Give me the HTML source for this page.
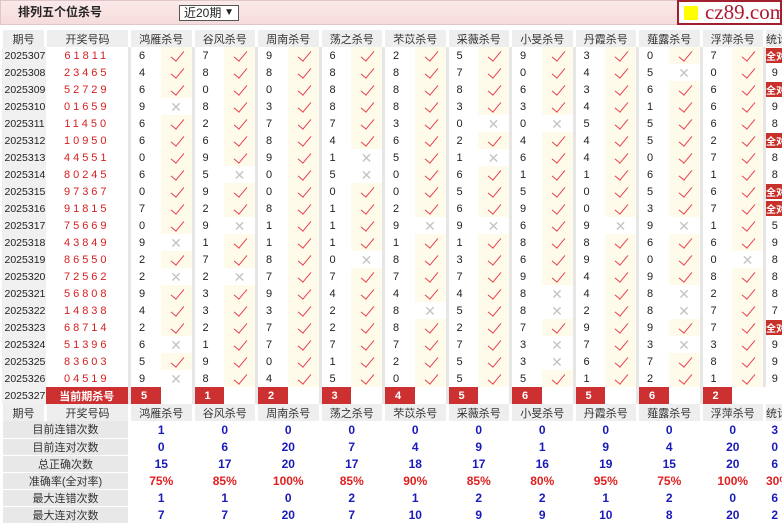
<!DOCTYPE html>
<html><head><meta charset="utf-8"><style>
*{margin:0;padding:0;box-sizing:border-box}
body{width:782px;height:523px;overflow:hidden;background:#fff;font-family:"Liberation Sans","Noto Sans CJK SC",sans-serif;font-size:11px;color:#222;position:relative}
.top{position:absolute;left:0;top:0;width:680px;height:25px;background:linear-gradient(#fbe9e9,#f6dcdc);border:1px solid #e0c6c6}
.title{position:absolute;left:17px;top:4px;font-weight:bold;font-size:12px;line-height:15px}
.sel{position:absolute;left:178px;top:4px;width:60px;height:16px;border:1px solid #555;background:#fff;font-size:12px;padding-left:4px;line-height:14px}
.sel b{position:absolute;right:4px;top:0;font-size:10px}
.logo{position:absolute;left:677px;top:0;width:105px;height:25px;border:2px solid #a02030;background:#fff;font-family:"Liberation Serif",serif;font-size:21px;color:#b01830;line-height:21px;padding-left:26px}
.logo i{position:absolute;left:5px;top:4px;width:14px;height:14px;background:#ffff00}
table{position:absolute;left:0;top:30px;border-collapse:collapse;table-layout:fixed;width:782px}
td{height:17px;white-space:nowrap;overflow:hidden;padding:0}
tr.h td{background:#eee;text-align:center;color:#333;border-left:3px solid #fff}
td.q{background:#f0f0f0;text-align:left;padding-left:3px;font-size:10.5px}
td.k{text-align:center;color:#d42020;letter-spacing:3px;font-size:11px}
td.n{padding-left:8px;border-left:3px solid #e6e6e6}
td.m{background:#fffbea;font-size:0;position:relative}
td.m::after{content:"";position:absolute;left:13px;top:1px;width:6px;height:12px;border-right:1.6px solid #e8404e;border-bottom:1.6px solid #e8404e;transform:rotate(40deg)}
td.x{background:#fff;text-align:center;color:#c4c4c4;font-size:14px;line-height:16px}
td.s{text-align:center;border-left:3px solid #e6e6e6}
td.s span{display:block;background:#c8302a;color:#fff;font-weight:bold;font-size:10px;margin:1px 0}
tr.c td.r{background:#cc3030;color:#fff;font-weight:bold;text-align:center}
tr.c td.n{background:#cc3030;color:#fff;font-weight:bold;padding-left:10px}
tr.st td{text-align:center;color:#1a1ab8;font-weight:bold;font-size:12px;border-left:3px solid #fff}
tr.st td.l{background:#e8e8e8;color:#333;font-weight:normal;font-size:11px;border-bottom:1px solid #fff}
tr.st.p td{color:#e02020}
tr.st.p td.l{color:#333}
</style></head><body>
<div class="top"><span class="title">排列五个位杀号</span><div class="sel">近20期<b>▼</b></div></div>
<div class="logo"><i></i>cz89.com</div>
<table>
<colgroup><col style="width:44px"><col style="width:84px">
<col style="width:31px"><col style="width:32.5px"><col style="width:31px"><col style="width:32.5px"><col style="width:31px"><col style="width:32.5px"><col style="width:31px"><col style="width:32.5px"><col style="width:31px"><col style="width:32.5px"><col style="width:31px"><col style="width:32.5px"><col style="width:31px"><col style="width:32.5px"><col style="width:31px"><col style="width:32.5px"><col style="width:31px"><col style="width:32.5px"><col style="width:31px"><col style="width:32.5px"><col style="width:19px"></colgroup>
<tr class="h"><td>期号</td><td>开奖号码</td><td colspan=2>鸿雁杀号</td><td colspan=2>谷风杀号</td><td colspan=2>周南杀号</td><td colspan=2>荡之杀号</td><td colspan=2>芣苡杀号</td><td colspan=2>采薇杀号</td><td colspan=2>小旻杀号</td><td colspan=2>丹霞杀号</td><td colspan=2>薤露杀号</td><td colspan=2>浮萍杀号</td><td>统计</td></tr>
<tr><td class=q>2025307</td><td class=k>61811</td><td class=n>6</td><td class=m>✓</td><td class=n>7</td><td class=m>✓</td><td class=n>9</td><td class=m>✓</td><td class=n>6</td><td class=m>✓</td><td class=n>2</td><td class=m>✓</td><td class=n>5</td><td class=m>✓</td><td class=n>9</td><td class=m>✓</td><td class=n>3</td><td class=m>✓</td><td class=n>0</td><td class=m>✓</td><td class=n>7</td><td class=m>✓</td><td class=s><span>全对</span></td></tr>
<tr><td class=q>2025308</td><td class=k>23465</td><td class=n>4</td><td class=m>✓</td><td class=n>8</td><td class=m>✓</td><td class=n>8</td><td class=m>✓</td><td class=n>8</td><td class=m>✓</td><td class=n>8</td><td class=m>✓</td><td class=n>7</td><td class=m>✓</td><td class=n>0</td><td class=m>✓</td><td class=n>4</td><td class=m>✓</td><td class=n>5</td><td class=x>✕</td><td class=n>0</td><td class=m>✓</td><td class=s>9</td></tr>
<tr><td class=q>2025309</td><td class=k>52729</td><td class=n>6</td><td class=m>✓</td><td class=n>0</td><td class=m>✓</td><td class=n>0</td><td class=m>✓</td><td class=n>8</td><td class=m>✓</td><td class=n>8</td><td class=m>✓</td><td class=n>8</td><td class=m>✓</td><td class=n>6</td><td class=m>✓</td><td class=n>3</td><td class=m>✓</td><td class=n>6</td><td class=m>✓</td><td class=n>6</td><td class=m>✓</td><td class=s><span>全对</span></td></tr>
<tr><td class=q>2025310</td><td class=k>01659</td><td class=n>9</td><td class=x>✕</td><td class=n>8</td><td class=m>✓</td><td class=n>3</td><td class=m>✓</td><td class=n>8</td><td class=m>✓</td><td class=n>8</td><td class=m>✓</td><td class=n>3</td><td class=m>✓</td><td class=n>3</td><td class=m>✓</td><td class=n>4</td><td class=m>✓</td><td class=n>1</td><td class=m>✓</td><td class=n>6</td><td class=m>✓</td><td class=s>9</td></tr>
<tr><td class=q>2025311</td><td class=k>11450</td><td class=n>6</td><td class=m>✓</td><td class=n>2</td><td class=m>✓</td><td class=n>7</td><td class=m>✓</td><td class=n>7</td><td class=m>✓</td><td class=n>3</td><td class=m>✓</td><td class=n>0</td><td class=x>✕</td><td class=n>0</td><td class=x>✕</td><td class=n>5</td><td class=m>✓</td><td class=n>5</td><td class=m>✓</td><td class=n>6</td><td class=m>✓</td><td class=s>8</td></tr>
<tr><td class=q>2025312</td><td class=k>10950</td><td class=n>6</td><td class=m>✓</td><td class=n>6</td><td class=m>✓</td><td class=n>8</td><td class=m>✓</td><td class=n>4</td><td class=m>✓</td><td class=n>6</td><td class=m>✓</td><td class=n>2</td><td class=m>✓</td><td class=n>4</td><td class=m>✓</td><td class=n>4</td><td class=m>✓</td><td class=n>5</td><td class=m>✓</td><td class=n>2</td><td class=m>✓</td><td class=s><span>全对</span></td></tr>
<tr><td class=q>2025313</td><td class=k>44551</td><td class=n>0</td><td class=m>✓</td><td class=n>9</td><td class=m>✓</td><td class=n>9</td><td class=m>✓</td><td class=n>1</td><td class=x>✕</td><td class=n>5</td><td class=m>✓</td><td class=n>1</td><td class=x>✕</td><td class=n>6</td><td class=m>✓</td><td class=n>4</td><td class=m>✓</td><td class=n>0</td><td class=m>✓</td><td class=n>7</td><td class=m>✓</td><td class=s>8</td></tr>
<tr><td class=q>2025314</td><td class=k>80245</td><td class=n>6</td><td class=m>✓</td><td class=n>5</td><td class=x>✕</td><td class=n>0</td><td class=m>✓</td><td class=n>5</td><td class=x>✕</td><td class=n>0</td><td class=m>✓</td><td class=n>6</td><td class=m>✓</td><td class=n>1</td><td class=m>✓</td><td class=n>1</td><td class=m>✓</td><td class=n>6</td><td class=m>✓</td><td class=n>1</td><td class=m>✓</td><td class=s>8</td></tr>
<tr><td class=q>2025315</td><td class=k>97367</td><td class=n>0</td><td class=m>✓</td><td class=n>9</td><td class=m>✓</td><td class=n>0</td><td class=m>✓</td><td class=n>0</td><td class=m>✓</td><td class=n>0</td><td class=m>✓</td><td class=n>5</td><td class=m>✓</td><td class=n>5</td><td class=m>✓</td><td class=n>0</td><td class=m>✓</td><td class=n>5</td><td class=m>✓</td><td class=n>6</td><td class=m>✓</td><td class=s><span>全对</span></td></tr>
<tr><td class=q>2025316</td><td class=k>91815</td><td class=n>7</td><td class=m>✓</td><td class=n>2</td><td class=m>✓</td><td class=n>8</td><td class=m>✓</td><td class=n>1</td><td class=m>✓</td><td class=n>2</td><td class=m>✓</td><td class=n>6</td><td class=m>✓</td><td class=n>9</td><td class=m>✓</td><td class=n>0</td><td class=m>✓</td><td class=n>3</td><td class=m>✓</td><td class=n>7</td><td class=m>✓</td><td class=s><span>全对</span></td></tr>
<tr><td class=q>2025317</td><td class=k>75669</td><td class=n>0</td><td class=m>✓</td><td class=n>9</td><td class=x>✕</td><td class=n>1</td><td class=m>✓</td><td class=n>1</td><td class=m>✓</td><td class=n>9</td><td class=x>✕</td><td class=n>9</td><td class=x>✕</td><td class=n>6</td><td class=m>✓</td><td class=n>9</td><td class=x>✕</td><td class=n>9</td><td class=x>✕</td><td class=n>1</td><td class=m>✓</td><td class=s>5</td></tr>
<tr><td class=q>2025318</td><td class=k>43849</td><td class=n>9</td><td class=x>✕</td><td class=n>1</td><td class=m>✓</td><td class=n>1</td><td class=m>✓</td><td class=n>1</td><td class=m>✓</td><td class=n>1</td><td class=m>✓</td><td class=n>1</td><td class=m>✓</td><td class=n>8</td><td class=m>✓</td><td class=n>8</td><td class=m>✓</td><td class=n>6</td><td class=m>✓</td><td class=n>6</td><td class=m>✓</td><td class=s>9</td></tr>
<tr><td class=q>2025319</td><td class=k>86550</td><td class=n>2</td><td class=m>✓</td><td class=n>7</td><td class=m>✓</td><td class=n>8</td><td class=m>✓</td><td class=n>0</td><td class=x>✕</td><td class=n>8</td><td class=m>✓</td><td class=n>3</td><td class=m>✓</td><td class=n>6</td><td class=m>✓</td><td class=n>9</td><td class=m>✓</td><td class=n>0</td><td class=m>✓</td><td class=n>0</td><td class=x>✕</td><td class=s>8</td></tr>
<tr><td class=q>2025320</td><td class=k>72562</td><td class=n>2</td><td class=x>✕</td><td class=n>2</td><td class=x>✕</td><td class=n>7</td><td class=m>✓</td><td class=n>7</td><td class=m>✓</td><td class=n>7</td><td class=m>✓</td><td class=n>7</td><td class=m>✓</td><td class=n>9</td><td class=m>✓</td><td class=n>4</td><td class=m>✓</td><td class=n>9</td><td class=m>✓</td><td class=n>8</td><td class=m>✓</td><td class=s>8</td></tr>
<tr><td class=q>2025321</td><td class=k>56808</td><td class=n>9</td><td class=m>✓</td><td class=n>3</td><td class=m>✓</td><td class=n>9</td><td class=m>✓</td><td class=n>4</td><td class=m>✓</td><td class=n>4</td><td class=m>✓</td><td class=n>4</td><td class=m>✓</td><td class=n>8</td><td class=x>✕</td><td class=n>4</td><td class=m>✓</td><td class=n>8</td><td class=x>✕</td><td class=n>2</td><td class=m>✓</td><td class=s>8</td></tr>
<tr><td class=q>2025322</td><td class=k>14838</td><td class=n>4</td><td class=m>✓</td><td class=n>3</td><td class=m>✓</td><td class=n>3</td><td class=m>✓</td><td class=n>2</td><td class=m>✓</td><td class=n>8</td><td class=x>✕</td><td class=n>5</td><td class=m>✓</td><td class=n>8</td><td class=x>✕</td><td class=n>2</td><td class=m>✓</td><td class=n>8</td><td class=x>✕</td><td class=n>7</td><td class=m>✓</td><td class=s>7</td></tr>
<tr><td class=q>2025323</td><td class=k>68714</td><td class=n>2</td><td class=m>✓</td><td class=n>2</td><td class=m>✓</td><td class=n>7</td><td class=m>✓</td><td class=n>2</td><td class=m>✓</td><td class=n>8</td><td class=m>✓</td><td class=n>2</td><td class=m>✓</td><td class=n>7</td><td class=m>✓</td><td class=n>9</td><td class=m>✓</td><td class=n>9</td><td class=m>✓</td><td class=n>7</td><td class=m>✓</td><td class=s><span>全对</span></td></tr>
<tr><td class=q>2025324</td><td class=k>51396</td><td class=n>6</td><td class=x>✕</td><td class=n>1</td><td class=m>✓</td><td class=n>7</td><td class=m>✓</td><td class=n>7</td><td class=m>✓</td><td class=n>7</td><td class=m>✓</td><td class=n>7</td><td class=m>✓</td><td class=n>3</td><td class=x>✕</td><td class=n>7</td><td class=m>✓</td><td class=n>3</td><td class=x>✕</td><td class=n>3</td><td class=m>✓</td><td class=s>9</td></tr>
<tr><td class=q>2025325</td><td class=k>83603</td><td class=n>5</td><td class=m>✓</td><td class=n>9</td><td class=m>✓</td><td class=n>0</td><td class=m>✓</td><td class=n>1</td><td class=m>✓</td><td class=n>2</td><td class=m>✓</td><td class=n>5</td><td class=m>✓</td><td class=n>3</td><td class=x>✕</td><td class=n>6</td><td class=m>✓</td><td class=n>7</td><td class=m>✓</td><td class=n>8</td><td class=m>✓</td><td class=s>9</td></tr>
<tr><td class=q>2025326</td><td class=k>04519</td><td class=n>9</td><td class=x>✕</td><td class=n>8</td><td class=m>✓</td><td class=n>4</td><td class=m>✓</td><td class=n>5</td><td class=m>✓</td><td class=n>0</td><td class=m>✓</td><td class=n>5</td><td class=m>✓</td><td class=n>5</td><td class=m>✓</td><td class=n>1</td><td class=m>✓</td><td class=n>2</td><td class=m>✓</td><td class=n>1</td><td class=m>✓</td><td class=s>9</td></tr>
<tr class="c"><td class=q>2025327</td><td class=r>当前期杀号</td><td class=n>5</td><td></td><td class=n>1</td><td></td><td class=n>2</td><td></td><td class=n>3</td><td></td><td class=n>4</td><td></td><td class=n>5</td><td></td><td class=n>6</td><td></td><td class=n>5</td><td></td><td class=n>6</td><td></td><td class=n>2</td><td></td><td></td></tr>
<tr class="h"><td>期号</td><td>开奖号码</td><td colspan=2>鸿雁杀号</td><td colspan=2>谷风杀号</td><td colspan=2>周南杀号</td><td colspan=2>荡之杀号</td><td colspan=2>芣苡杀号</td><td colspan=2>采薇杀号</td><td colspan=2>小旻杀号</td><td colspan=2>丹霞杀号</td><td colspan=2>薤露杀号</td><td colspan=2>浮萍杀号</td><td>统计</td></tr>
<tr class="st"><td class=l colspan=2>目前连错次数</td><td colspan=2>1</td><td colspan=2>0</td><td colspan=2>0</td><td colspan=2>0</td><td colspan=2>0</td><td colspan=2>0</td><td colspan=2>0</td><td colspan=2>0</td><td colspan=2>0</td><td colspan=2>0</td><td>3</td></tr>
<tr class="st"><td class=l colspan=2>目前连对次数</td><td colspan=2>0</td><td colspan=2>6</td><td colspan=2>20</td><td colspan=2>7</td><td colspan=2>4</td><td colspan=2>9</td><td colspan=2>1</td><td colspan=2>9</td><td colspan=2>4</td><td colspan=2>20</td><td>0</td></tr>
<tr class="st"><td class=l colspan=2>总正确次数</td><td colspan=2>15</td><td colspan=2>17</td><td colspan=2>20</td><td colspan=2>17</td><td colspan=2>18</td><td colspan=2>17</td><td colspan=2>16</td><td colspan=2>19</td><td colspan=2>15</td><td colspan=2>20</td><td>6</td></tr>
<tr class="st p"><td class=l colspan=2>准确率(全对率)</td><td colspan=2>75%</td><td colspan=2>85%</td><td colspan=2>100%</td><td colspan=2>85%</td><td colspan=2>90%</td><td colspan=2>85%</td><td colspan=2>80%</td><td colspan=2>95%</td><td colspan=2>75%</td><td colspan=2>100%</td><td>30%</td></tr>
<tr class="st"><td class=l colspan=2>最大连错次数</td><td colspan=2>1</td><td colspan=2>1</td><td colspan=2>0</td><td colspan=2>2</td><td colspan=2>1</td><td colspan=2>2</td><td colspan=2>2</td><td colspan=2>1</td><td colspan=2>2</td><td colspan=2>0</td><td>6</td></tr>
<tr class="st"><td class=l colspan=2>最大连对次数</td><td colspan=2>7</td><td colspan=2>7</td><td colspan=2>20</td><td colspan=2>7</td><td colspan=2>10</td><td colspan=2>9</td><td colspan=2>9</td><td colspan=2>10</td><td colspan=2>8</td><td colspan=2>20</td><td>2</td></tr>
</table>
</body></html>
